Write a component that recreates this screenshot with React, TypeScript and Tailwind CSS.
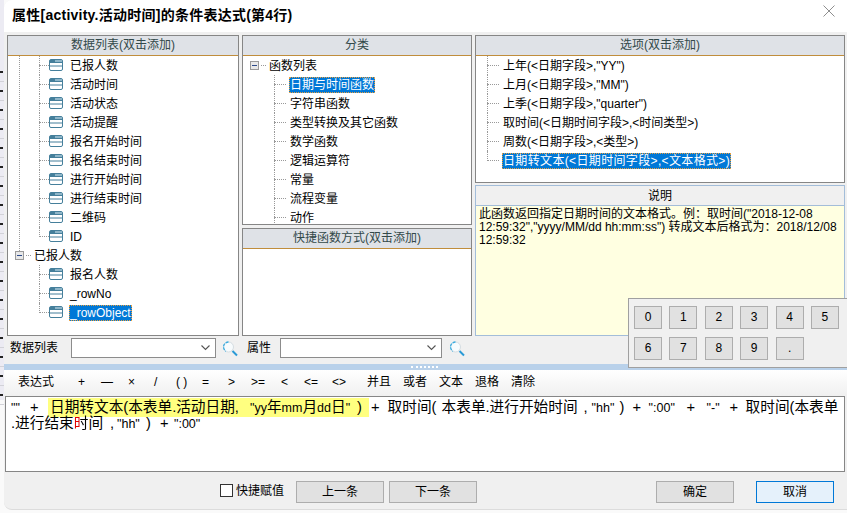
import React from "react";

const FONT = { fontFamily: '"Liberation Sans", "Noto Sans CJK SC", sans-serif' };

function FieldIcon() {
  return (
    <svg width="15" height="13" viewBox="0 0 15 13" className="shrink-0">
      <rect x="0.5" y="0.5" width="13" height="11" rx="1.5" fill="#fff" stroke="#457f9b" />
      <rect x="1" y="1" width="12" height="3" fill="#457f9b" />
      <rect x="6" y="1" width="7" height="2" fill="#8fb6c9" />
      <line x1="1" y1="7" x2="13" y2="7" stroke="#457f9b" />
    </svg>
  );
}

function Minus() {
  return (
    <span className="w-[9px] h-[9px] border border-[#9a9a9a] bg-[#e8e8e8] flex items-center justify-center shrink-0">
      <span className="w-[5px] h-px bg-[#2c4a8a]" />
    </span>
  );
}

function Header({ children, cls = "bg-[#dfe2e7] border-[#c08d3c] text-[#33494a] leading-[19px]" }: { children: React.ReactNode; cls?: string }) {
  return <div className={`h-[20px] shrink-0 border-b text-center text-[12px] ${cls}`}>{children}</div>;
}

function Dash({ w = 9 }: { w?: number }) {
  return <span className="border-t border-dotted border-[#999] shrink-0" style={{ width: w }} />;
}

const SEL = "bg-[#0078d7] text-white outline-1 outline-dotted outline-[#e8a040] -outline-offset-1";

function FieldRow({ label, selected, last }: { label: string; selected?: boolean; last?: boolean }) {
  return (
    <div className="relative h-[19px] shrink-0 flex items-center pl-[31px]">
      <span className={`absolute left-[31px] top-0 border-l border-dotted border-[#999] ${last ? "h-[10px]" : "h-[19px]"}`} />
      <Dash w={10} />
      <FieldIcon />
      <span className={`ml-[5px] text-[12px] leading-[16px] px-px ${selected ? SEL : "text-black"}`}>{label}</span>
    </div>
  );
}

function FnRow({ label, selected }: { label: string; selected?: boolean }) {
  return (
    <div className="relative h-[19px] shrink-0 flex items-center pl-[31px] gap-[3px]">
      <span className="absolute left-[31px] top-0 h-[19px] border-l border-dotted border-[#999]" />
      <Dash w={12} />
      <span className={`text-[12px] leading-[16px] px-px ${selected ? SEL : "text-black"}`}>{label}</span>
    </div>
  );
}

function OptRow({ label, selected, last }: { label: string; selected?: boolean; last?: boolean }) {
  return (
    <div className="relative h-[19px] shrink-0 flex items-center pl-[11px] gap-[3px]">
      <span className={`absolute left-[11px] top-0 border-l border-dotted border-[#999] ${last ? "h-[10px]" : "h-[19px]"}`} />
      <Dash w={12} />
      <span className={`text-[12px] leading-[16px] px-px ${selected ? `${SEL} tracking-[0.35px]` : "text-black"}`}>{label}</span>
    </div>
  );
}

function Search() {
  return (
    <svg width="16" height="17" viewBox="0 0 16 17" className="shrink-0">
      <circle cx="6.5" cy="7" r="5" fill="#f7fbfd" stroke="#d5dde2" strokeWidth="1" />
      <path d="M6.5 2 A5 5 0 0 0 4 11.3" fill="none" stroke="#39ace0" strokeWidth="1.3" strokeDasharray="3 1" />
      <line x1="10.5" y1="11" x2="15" y2="15.5" stroke="#2a9ad6" strokeWidth="2" />
    </svg>
  );
}

function Combo({ w }: { w: string }) {
  return (
    <div className={`${w} h-[20px] bg-white border border-[#8c8c8c] flex items-center justify-end pr-[5px] shrink-0`}>
      <svg width="9" height="6" viewBox="0 0 9 6"><path d="M0.5 0.5 L4.5 4.5 L8.5 0.5" fill="none" stroke="#555" strokeWidth="1.1" /></svg>
    </div>
  );
}

function Key({ k }: { k: string }) {
  return <div className="w-[28px] h-[23px] bg-[#e1e1e1] border border-[#adadad] text-[12px] leading-[21px] text-center text-black">{k}</div>;
}

function Btn({ label, cls }: { label: string; cls: string }) {
  return <div className={`h-[22px] shrink-0 border text-[12px] leading-[20px] text-center text-black ${cls}`}>{label}</div>;
}

function T({ w, children }: { w?: number; children: React.ReactNode }) {
  return <span className="shrink-0 whitespace-pre" style={w ? { width: w } : undefined}>{children}</span>;
}

function L({ children }: { children: React.ReactNode }) {
  return <span className="text-[12.5px]">{children}</span>;
}

export default function App() {
  const fields = ["已报人数", "活动时间", "活动状态", "活动提醒", "报名开始时间", "报名结束时间", "进行开始时间", "进行结束时间", "二维码", "ID"];
  const fns = ["日期与时间函数", "字符串函数", "类型转换及其它函数", "数学函数", "逻辑运算符", "常量", "流程变量", "动作"];
  const opts = ['上年(<日期字段>,"YY")', '上月(<日期字段>,"MM")', '上季(<日期字段>,"quarter")', "取时间(<日期时间字段>,<时间类型>)", "周数(<日期字段>,<类型>)", "日期转文本(<日期时间字段>,<文本格式>)"];
  const tools: [string, number][] = [["表达式", 60], ["+", 23], ["—", 27], ["×", 26], ["/", 22], ["( )", 26], ["=", 26], [">", 23], [">=", 30], ["<", 23], ["<=", 28], ["<>", 35], ["并且", 36], ["或者", 36], ["文本", 36], ["退格", 36], ["清除", 36]];
  const marks = Array.from({ length: 18 }, (_, i) => i);

  return (
    <div style={FONT} className="relative w-[847px] h-[513px] overflow-hidden bg-[#fafafa] flex">
      <div className="w-[4px] shrink-0 h-[400px] bg-[#ecebf3] flex flex-col pt-[63px]">
        {marks.map((i) => (
          <div key={i} className="h-[19px] shrink-0 border-b border-[#d2d2d8] flex items-center">
            <span className="w-[3px] h-[2px] bg-[#222]" />
          </div>
        ))}
      </div>
      <div className="flex-1 h-[510px] bg-[#f0f0f0] rounded-bl-[8px] rounded-tl-[8px] flex flex-col overflow-hidden border-b border-[#dcdcdc]">
        <div className="h-[32px] shrink-0 bg-white flex items-center justify-between pl-[8px] pr-[12px]">
          <span className="text-[14px] font-bold text-black leading-[20px] -mt-[3px] tracking-[0.25px]">属性[activity.活动时间]的条件表达式(第4行)</span>
          <svg width="12" height="12" viewBox="0 0 12 12" className="-mt-[11px]"><path d="M0.5 0.5 L11.5 11.5 M11.5 0.5 L0.5 11.5" stroke="#8e8e8e" strokeWidth="1" /></svg>
        </div>

        <div className="flex pt-[3px] pl-[3px] gap-[3px] h-[304px] shrink-0">
          <div className="w-[232px] h-[301px] bg-white border border-[#868686] flex flex-col overflow-hidden">
            <Header>数据列表(双击添加)</Header>
            <div className="relative">
              <span className="absolute left-[11px] top-0 h-[195px] border-l border-dotted border-[#999]" />
              {fields.map((f, i) => <FieldRow key={f} label={f} last={i === fields.length - 1} />)}
              <div className="relative h-[19px] flex items-center pl-[7px] gap-[2px]">
                <Minus />
                <Dash w={5} />
                <span className="text-[12px] leading-[16px] pl-px text-black">已报人数</span>
              </div>
              <FieldRow label="报名人数" />
              <FieldRow label="_rowNo" />
              <FieldRow label="_rowObject" selected last />
            </div>
          </div>

          <div className="w-[230px] flex flex-col gap-[3px]">
            <div className="h-[190px] bg-white border border-[#868686] flex flex-col overflow-hidden">
              <Header>分类</Header>
              <div className="relative h-[19px] flex items-center pl-[7px] gap-[2px] shrink-0">
                <Minus />
                <Dash w={5} />
                <span className="text-[12px] leading-[16px] pl-px text-black">函数列表</span>
              </div>
              {fns.map((f, i) => <FnRow key={f} label={f} selected={i === 0} />)}
            </div>
            <div className="h-[108px] bg-white border border-[#868686] flex flex-col overflow-hidden">
              <Header>快捷函数方式(双击添加)</Header>
            </div>
          </div>

          <div className="w-[370px] flex flex-col gap-[2px]">
            <div className="h-[148px] bg-white border border-[#868686] flex flex-col overflow-hidden">
              <Header>选项(双击添加)</Header>
              {opts.map((o, i) => <OptRow key={o} label={o} selected={i === 5} last={i === 5} />)}
            </div>
            <div className="h-[151px] bg-[#ffffe1] border border-[#a3bdd9] flex flex-col overflow-hidden">
              <Header cls="bg-[#f0f0f0] border-[#a3bdd9] text-black leading-[21px]">说明</Header>
              <div className="text-[12px] leading-[13px] pl-[3px] pt-[2px] text-black whitespace-pre">
                {'此函数返回指定日期时间的文本格式。例：取时间("2018-12-08\n12:59:32","yyyy/MM/dd hh:mm:ss") 转成文本后格式为：2018/12/08\n12:59:32'}
              </div>
            </div>
          </div>
        </div>

        <div className="h-[24px] shrink-0 flex items-center pl-[6px]">
          <span className="w-[61px] text-[12px] text-black">数据列表</span>
          <Combo w="w-[145px]" />
          <span className="ml-[6px]"><Search /></span>
          <span className="ml-[9px] w-[33px] text-[12px] text-black">属性</span>
          <Combo w="w-[162px]" />
          <span className="ml-[7px]"><Search /></span>
        </div>

        <div className="h-[6px] shrink-0 mt-[4px] bg-[#b9d1ea] flex justify-center items-center pr-[3px]">
          <span className="w-[27px] border-t-2 border-dotted border-white" />
        </div>

        <div className="h-[26px] shrink-0 bg-gradient-to-b from-white to-[#f0f0f0] flex pl-[14px] text-[12px] text-black leading-[25px]">
          {tools.map(([o, w]) => <T key={o} w={w}>{o}</T>)}
        </div>

        <div className="h-[76px] shrink-0 ml-[1px] mr-[2px] bg-white border border-[#868686] text-[14.67px] leading-[16px] text-black pl-[5px] pt-[2px]">
          <div className="flex items-center h-[16px]">
            <T w={19}><L>""</L></T>
            <T w={18}>+</T>
            <div className="w-[321px] h-[19px] shrink-0 bg-[#ffff80] flex items-center pl-[2px]">
              <T w={200}>日期转文本(本表单.活动日期,</T>
              <T w={107}><L>"yy</L>年<L>mm</L>月<L>dd</L>日<L>"</L></T>
              <T>)</T>
            </div>
            <span className="ml-[2px]"><T>+</T></span>
            <span className="ml-[8px] flex"><T w={54}>取时间(</T></span>
            <T w={142}>本表单.进行开始时间</T>
            <T w={8}>,</T>
            <T w={28}><L>"hh"</L></T>
            <T w={13}>)</T>
            <T w={16}>+</T>
            <T w={38}><L>":00"</L></T>
            <T w={20}>+</T>
            <T w={23}><L>"-"</L></T>
            <T w={16}>+</T>
            <T>取时间(本表单</T>
          </div>
          <div className="flex items-center h-[16px]">
            <T w={99}>
              .进行结束
              <span className="bg-clip-text text-transparent bg-[linear-gradient(90deg,#e00000_45%,#000_45%)]">时</span>
              间
            </T>
            <T w={7}>,</T>
            <T w={29}><L>"hh"</L></T>
            <T w={14}>)</T>
            <T w={14}>+</T>
            <T><L>":00"</L></T>
          </div>
        </div>

        <div className="flex-1 flex items-start pt-[9px] pl-[216px]">
          <span className="w-[13px] h-[13px] mt-[3px] bg-white border border-[#333] shrink-0" />
          <span className="w-[63px] pl-[3px] text-[12px] leading-[20px] text-black shrink-0">快捷赋值</span>
          <div className="w-[88px]"><Btn label="上一条" cls="bg-[#e1e1e1] border-[#adadad]" /></div>
          <div className="w-[88px] ml-[5px]"><Btn label="下一条" cls="bg-[#e1e1e1] border-[#adadad]" /></div>
          <div className="w-[78px] ml-[179px]"><Btn label="确定" cls="bg-[#e1e1e1] border-[#adadad]" /></div>
          <div className="w-[78px] ml-[22px]"><Btn label="取消" cls="bg-[#e5f1fb] border-[#0078d7]" /></div>
        </div>
      </div>

      <div className="absolute left-[628px] top-[298px] w-[219px] h-[70px] bg-[#f0f0f0] border border-[#a0a0a0] border-r-0 pl-[5px] pt-[7px]">
        <div className="grid grid-cols-[repeat(6,28px)] gap-x-[7.4px] gap-y-[8px]">
          {["0", "1", "2", "3", "4", "5", "6", "7", "8", "9", "."].map((k) => <Key key={k} k={k} />)}
        </div>
      </div>
    </div>
  );
}
